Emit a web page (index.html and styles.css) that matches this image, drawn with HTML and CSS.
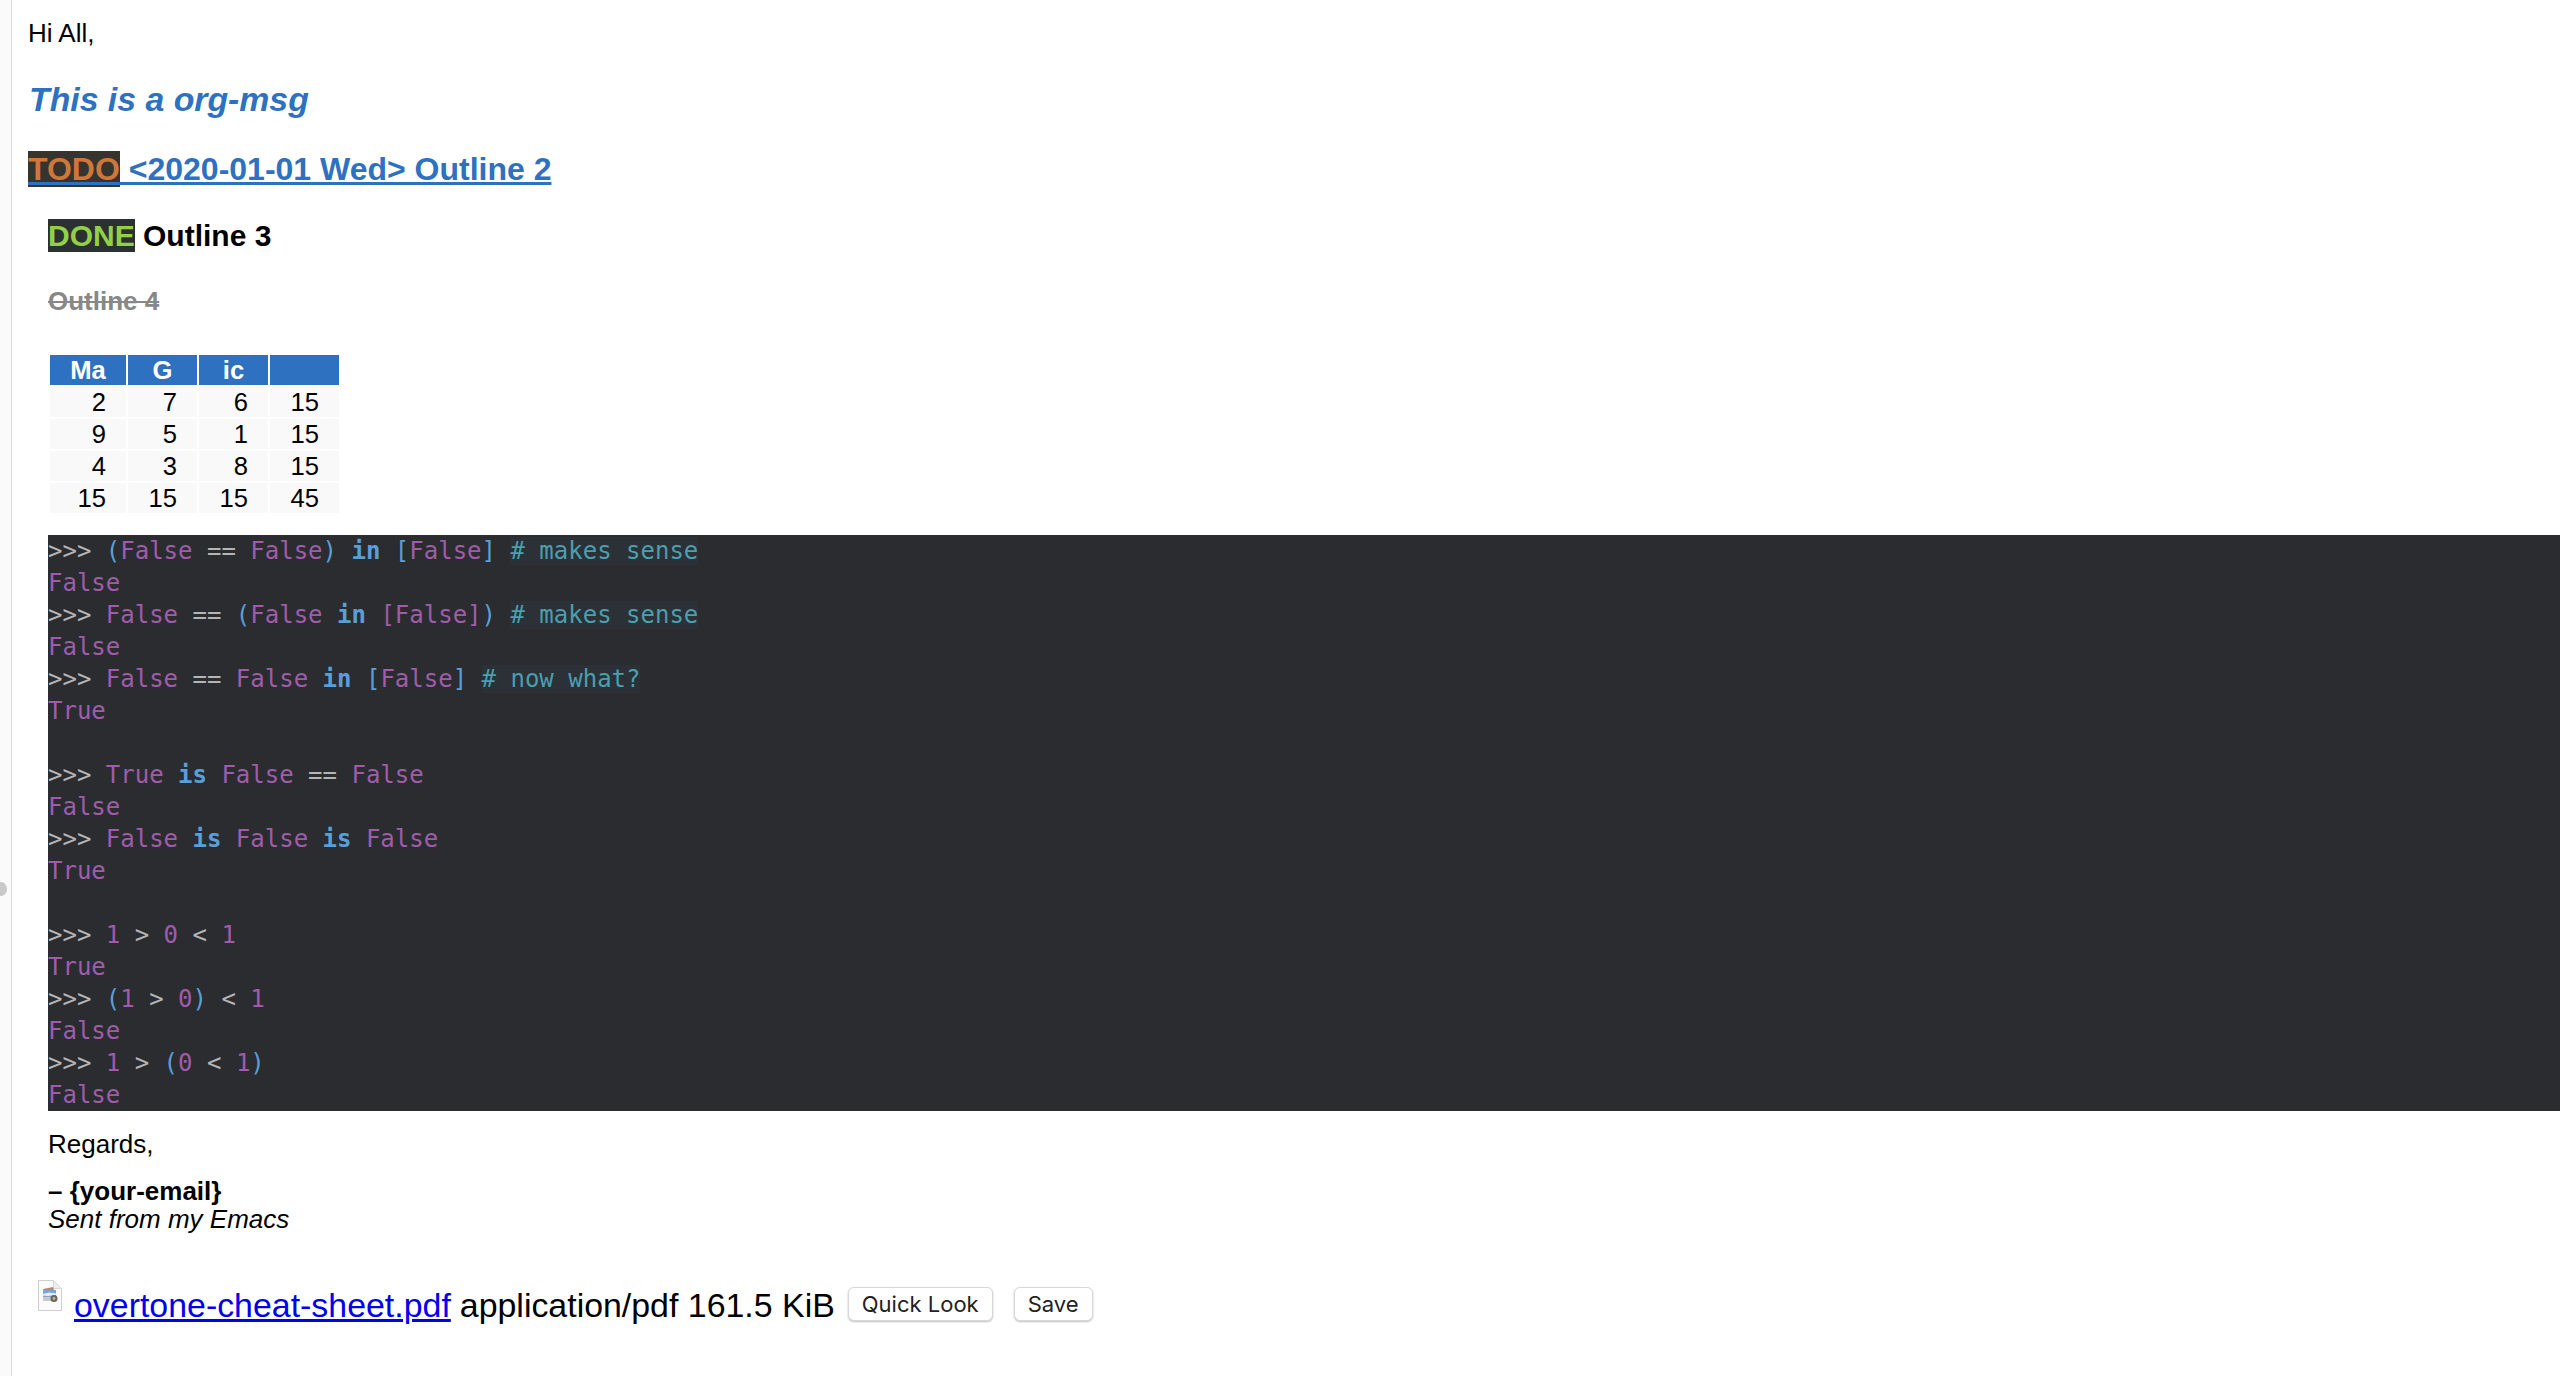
FILE: index.html
```html
<!DOCTYPE html>
<html lang="en">
<head>
<meta charset="utf-8">
<title>org-msg</title>
<link rel="stylesheet" href="styles.css">
</head>
<body>
<div class="handle"></div>
<main class="mail">
  <p class="greeting">Hi All,</p>
  <h1 class="title">This is a org-msg</h1>
  <h2 class="outline2"><span class="todo">TODO</span> &lt;2020-01-01 Wed&gt; Outline 2</h2>
  <section class="indented">
    <h3 class="outline3"><span class="done">DONE</span> Outline 3</h3>
    <h4 class="outline4">Outline 4</h4>
    <table class="magic">
      <thead>
        <tr><th>Ma</th><th>G</th><th>ic</th><th></th></tr>
      </thead>
      <tbody>
        <tr><td>2</td><td>7</td><td>6</td><td>15</td></tr>
        <tr><td>9</td><td>5</td><td>1</td><td>15</td></tr>
        <tr><td>4</td><td>3</td><td>8</td><td>15</td></tr>
        <tr><td>15</td><td>15</td><td>15</td><td>45</td></tr>
      </tbody>
    </table>
<pre class="code"><span class="pr">&gt;&gt;&gt; </span><span class="br">(</span><span class="v">False</span> <span class="op">==</span> <span class="v">False</span><span class="br">)</span> <span class="kw">in</span> <span class="br">[</span><span class="v">False</span><span class="br">]</span> <span class="cm"># makes sense</span>
<span class="v">False</span>
<span class="pr">&gt;&gt;&gt; </span><span class="v">False</span> <span class="op">==</span> <span class="br">(</span><span class="v">False</span> <span class="kw">in</span> <span class="br2">[</span><span class="v">False</span><span class="br2">]</span><span class="br">)</span> <span class="cm"># makes sense</span>
<span class="v">False</span>
<span class="pr">&gt;&gt;&gt; </span><span class="v">False</span> <span class="op">==</span> <span class="v">False</span> <span class="kw">in</span> <span class="br">[</span><span class="v">False</span><span class="br">]</span> <span class="cm"># now what?</span>
<span class="v">True</span>

<span class="pr">&gt;&gt;&gt; </span><span class="v">True</span> <span class="kw">is</span> <span class="v">False</span> <span class="op">==</span> <span class="v">False</span>
<span class="v">False</span>
<span class="pr">&gt;&gt;&gt; </span><span class="v">False</span> <span class="kw">is</span> <span class="v">False</span> <span class="kw">is</span> <span class="v">False</span>
<span class="v">True</span>

<span class="pr">&gt;&gt;&gt; </span><span class="v">1</span> <span class="op">&gt;</span> <span class="v">0</span> <span class="op">&lt;</span> <span class="v">1</span>
<span class="v">True</span>
<span class="pr">&gt;&gt;&gt; </span><span class="br">(</span><span class="v">1</span> <span class="op">&gt;</span> <span class="v">0</span><span class="br">)</span> <span class="op">&lt;</span> <span class="v">1</span>
<span class="v">False</span>
<span class="pr">&gt;&gt;&gt; </span><span class="v">1</span> <span class="op">&gt;</span> <span class="br">(</span><span class="v">0</span> <span class="op">&lt;</span> <span class="v">1</span><span class="br">)</span>
<span class="v">False</span></pre>
    <p class="regards">Regards,</p>
    <p class="signature"><b>– {your-email}</b><br><i>Sent from my Emacs</i></p>
  </section>
  <div class="attachment">
    <svg class="file-icon" width="24" height="31" viewBox="0 0 24 31" aria-hidden="true">
      <path d="M0.5 0.5H15.5L23.5 8.5V30.5H0.5Z" fill="#fbfbfb" stroke="#cfcfcf"/>
      <path d="M15.5 0.5V8.5H23.5Z" fill="#eeeeee" stroke="#d8d8d8"/>
      <path d="M5 9L15 7L16 10L6 12Z" fill="#b88a5e"/>
      <rect x="5" y="10" width="13" height="7" fill="#7fa3d6"/>
      <path d="M5 14L11 12.500L18 13.500V15L10 16L5 15.500Z" fill="#e9eef6"/>
      <rect x="5" y="17" width="12" height="4" fill="#c9c9c9"/>
      <circle cx="16" cy="18.500" r="3.500" fill="#6d6558"/>
      <circle cx="16" cy="18.500" r="1.400" fill="#bdb6a6"/>
    </svg>
    <a class="file-link" href="#">overtone-cheat-sheet.pdf</a>
    <span class="file-meta">application/pdf 161.5 KiB</span>
    <button class="action quick" type="button">Quick Look</button>
    <button class="action" type="button">Save</button>
  </div>
</main>
</body>
</html>
```

FILE: styles.css
```css
html, body {
  margin: 0;
  padding: 0;
  height: 100%;
  background: #ffffff;
}
body {
  font-family: "Liberation Sans", Arial, sans-serif;
  font-size: 26px;
  color: #000000;
  overflow: hidden;
  background: #fafafa;
  padding-left: 11px;
  box-sizing: border-box;
  position: relative;
}
.handle {
  position: absolute;
  left: -5px;
  top: 882px;
  width: 12px;
  height: 14px;
  border-radius: 50%;
  background: #c9c9c9;
}
.mail {
  background: #ffffff;
  border-left: 1px solid #dcdcdc;
  height: 100%;
  padding-top: 18px;
  box-sizing: border-box;
}
.greeting {
  margin: 0 0 31px 16px;
}
.title {
  margin: 0 0 32px 17px;
  font-size: 33.8px;
  font-style: italic;
  font-weight: bold;
  color: #2e71c0;
}
.outline2 {
  margin: 0 0 31px 16px;
  font-size: 32px;
  font-weight: bold;
  color: #2e71c0;
  text-decoration: underline;
}
.todo {
  background: #35342f;
  color: #ce773b;
}
.indented {
  padding-left: 36px;
  padding-right: 2px;
}
.outline3 {
  margin: 0 0 33px;
  font-size: 30px;
  font-weight: bold;
}
.done {
  background: #2b3033;
  color: #92d145;
}
.outline4 {
  margin: 0 0 36px;
  font-size: 26px;
  font-weight: bold;
  color: #888888;
  text-decoration: line-through;
}
.magic {
  border-collapse: separate;
  border-spacing: 2px;
  margin: 0 0 20px;
  font-size: 25.6px;
  table-layout: fixed;
  width: 293px;
}
.magic th, .magic td {
  height: 30px;
  padding: 0 20px 0 0;
  line-height: 30px;
  box-sizing: border-box;
}
.magic th {
  background: #2e71c0;
  color: #ffffff;
  font-weight: bold;
  text-align: center;
  padding: 0;
}
.magic td {
  background: #f9f9f9;
  text-align: right;
}
.magic th:first-child {
  width: 76px;
}
.magic th:not(:first-child) {
  width: 69px;
}
.code {
  margin: 0 0 18px;
  background: #2b2c30;
  font-family: "DejaVu Sans Mono", monospace;
  font-size: 24px;
  line-height: 32px;
  color: #a05cab;
}
.pr, .op { color: #b5b5b5; }
.br { color: #5a9fd8; }
.br2 { color: #a05cab; }
.v { color: #a05cab; }
.kw { color: #5a9fd8; font-weight: bold; }
.cm { color: #4a9fb0; background: #2b3136; }
.regards {
  margin: 0 0 17px;
}
.signature {
  margin: 0;
  line-height: 28px;
}
.attachment {
  display: flex;
  align-items: flex-start;
  margin: 48px 0 0 26px;
  font-size: 33.9px;
  line-height: 40px;
}
.file-icon {
  margin-right: 12px;
  margin-top: -1px;
  flex: none;
}
.file-link {
  color: #0000ee;
  margin-top: 4px;
}
.file-meta {
  margin-top: 4px;
  margin-left: 9px;
}
.action {
  height: 34px;
  margin-top: 6px;
  margin-left: 13px;
  padding: 0 13px;
  font-family: Inter, sans-serif;
  font-size: 22px;
  color: #222222;
  background: #ffffff;
  border: 1px solid #d8d8d8;
  border-radius: 6px;
  box-shadow: 0 1px 2px rgba(0, 0, 0, 0.25);
}
.quick + .action {
  margin-left: 21px;
}
```
